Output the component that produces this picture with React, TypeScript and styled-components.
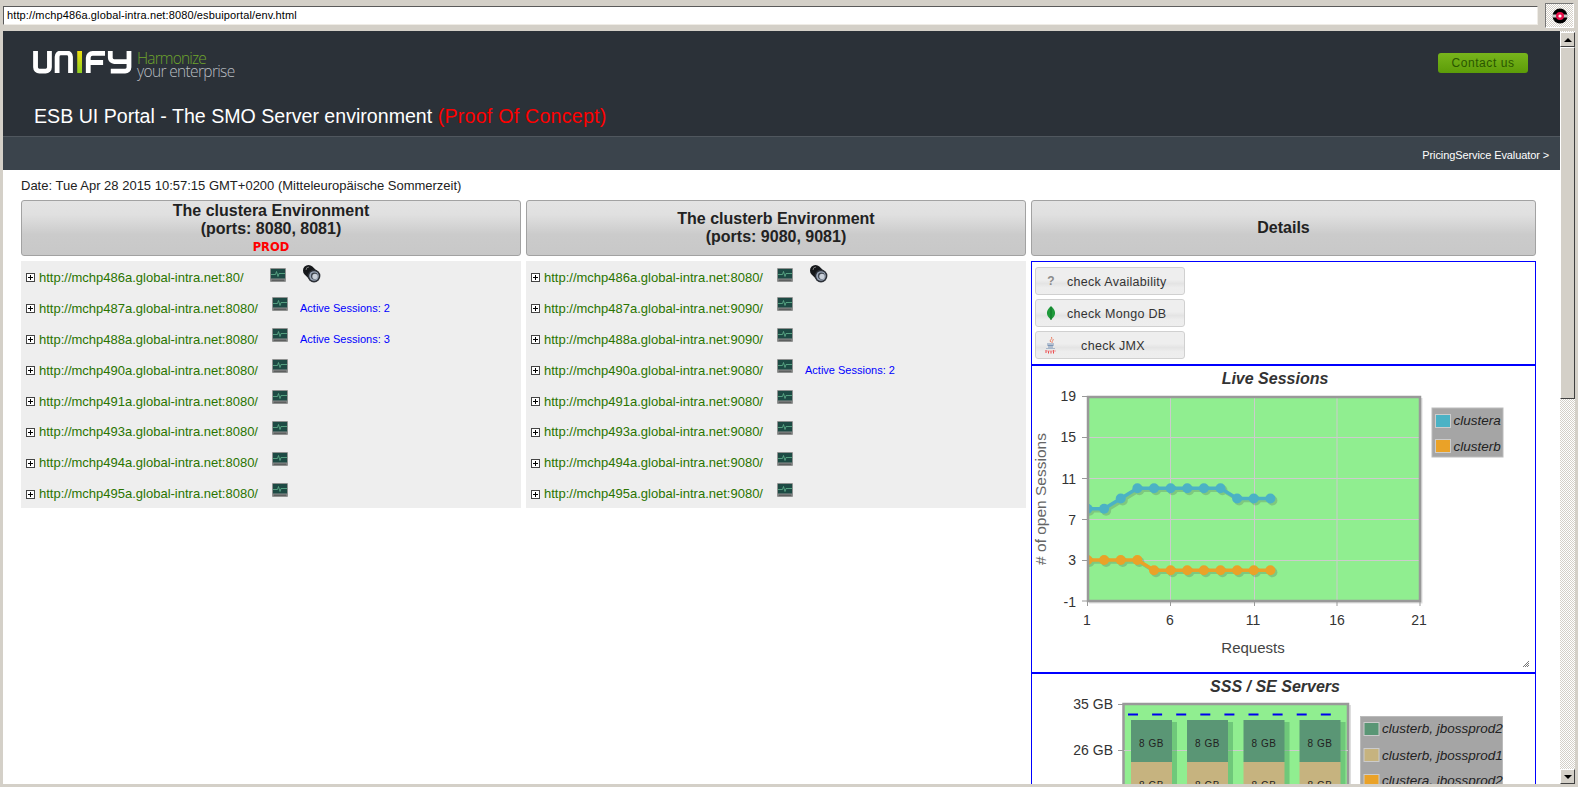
import React from "react";
import styled, { createGlobalStyle } from "styled-components";

const Global = createGlobalStyle`
  html, body { margin: 0; padding: 0; height: 100%; overflow: hidden; background: #d4d0c8; }
  body { font-family: "Liberation Sans", Arial, sans-serif; }
  * { box-sizing: border-box; }
`;

const Window = styled.div`
  width: 1578px; height: 787px; display: flex; flex-direction: column; background: #d4d0c8; overflow: hidden;
`;
const AddressBar = styled.div`
  height: 31px; padding: 3px 4px 0 3px; display: flex; gap: 7px; align-items: flex-start; flex: none;
`;
const AddressInput = styled.div`
  width: 1535px; height: 19px; margin-top: 3px; background: #fff; border: 1px solid; border-color: #5a5a5a #efece6 #efece6 #5a5a5a;
  font-size: 11px; letter-spacing: 0.12px; line-height: 17px; padding-left: 3px; color: #000; white-space: nowrap;
`;
const RecordButton = styled.div`
  width: 29px; height: 25px; border: 1px solid; border-color: #777 #fff #fff #777;
  background: conic-gradient(#d4d0c8 25%, #fff 0 50%, #d4d0c8 0 75%, #fff 0) 0 0 / 2px 2px;
  display: flex; align-items: center; justify-content: center;
`;
const Body = styled.div`
  flex: 1; display: flex; padding: 0 3px 3px 3px; min-height: 0;
`;
const Page = styled.div`
  width: 1557px; background: #fff; overflow: hidden; display: flex; flex-direction: column;
`;
const Masthead = styled.header`
  height: 105px; background: #2b3138; flex: none; display: flex; flex-direction: column; padding: 20px 32px 0 30px;
`;
const MastheadTop = styled.div`
  display: flex; justify-content: space-between; align-items: flex-start; height: 50px;
`;
const Brand = styled.div`
  display: flex; align-items: flex-start; gap: 5px;
`;
const Tagline = styled.div`
  font-family: "Open Sans", sans-serif; font-weight: 300; font-size: 15.5px; line-height: 12.5px; letter-spacing: -0.65px; color: #b9bdc1; white-space: nowrap; padding-top: 1px;
  span { display: block; color: #6fa52c; letter-spacing: -0.85px; }
`;
const ContactButton = styled.div`
  width: 90px; height: 20px; margin-top: 2px; border-radius: 3px; background: linear-gradient(#78b51c, #5c9c08);
  color: #2a5600; font-size: 12px; letter-spacing: 0.55px; line-height: 20px; text-align: center;
`;
const Title = styled.h1`
  margin: 2px 0 0 1px; font-size: 19.6px; font-weight: normal; line-height: 26px; color: #fff; white-space: nowrap;
  span { color: #ff0000; letter-spacing: 0.25px; }
`;
const NavBar = styled.nav`
  height: 34px; flex: none; background: #3b444c; border-top: 1px solid #50575e; color: #fff; font-size: 11px; letter-spacing: -0.1px;
  display: flex; justify-content: flex-end; align-items: flex-start; padding: 12px 11px 0 0; line-height: 13px;
`;
const Content = styled.main`
  flex: 1; padding: 8px 0 0 18px; min-height: 0;
`;
const DateLine = styled.div`
  font-size: 13px; line-height: 16px; color: #222; height: 22px;
`;
const Columns = styled.div`
  display: grid; grid-template-columns: 500px 500px 505px; column-gap: 5px; align-items: start;
`;
const Column = styled.section`
  display: flex; flex-direction: column; gap: 5px; min-width: 0;
`;
const ColumnHead = styled.div`
  height: 56px; border: 1px solid #a2a2a2; border-radius: 3px;
  background: linear-gradient(#e3e3e3 0%, #e0e0e0 25%, #cbcbcb 62%, #c8c8c8 100%);
  display: flex; flex-direction: column; align-items: center; justify-content: center;
  font-size: 16px; font-weight: bold; line-height: 18.5px; color: #222; text-align: center;
`;
const HeadPorts = styled.div`
  font-weight: bold; font-size: 16px;
`;
const ProdLabel = styled.div`
  font-family: "DejaVu Sans", sans-serif; font-size: 11.5px; line-height: 16px; color: #ff0000; font-weight: bold;
`;
const ServerList = styled.div`
  background: #eee; height: 247px; padding: 1px 0 0 5px;
`;
const ServerRow = styled.div`
  height: 30.9px; display: flex; align-items: center; white-space: nowrap;
`;
const ExpandBox = styled.span`
  width: 9px; height: 9px; flex: none; border: 1px solid #444; background: #fff; position: relative; margin: 1px 4px 0 0;
  &::before { content: ""; position: absolute; left: 1px; right: 1px; top: 3px; height: 1px; background: #000; }
  &::after { content: ""; position: absolute; top: 1px; bottom: 1px; left: 3px; width: 1px; background: #000; }
`;
const ServerLink = styled.span<{ $w: number }>`
  width: ${(p) => p.$w}px; flex: none; font-size: 13px; color: #2a7400;
`;
const IconSlot = styled.span<{ $w: number; $lift: number }>`
  width: ${(p) => p.$w}px; flex: none; height: 14px; margin-bottom: ${(p) => p.$lift}px; display: flex; align-items: center;
`;
const Sessions = styled.span`
  font-size: 11px; color: #0000ff;
`;
const Panel = styled.div`
  border: 1px solid #0000ff; flex: none;
`;
const ChecksPanel = styled(Panel)`
  height: 104px; padding: 5px 3px; display: flex; flex-direction: column; gap: 4px;
`;
const ChartPanel = styled(Panel)<{ $h: number }>`
  height: ${(p) => p.$h}px; svg { display: block; }
`;
const PanelStack = styled.div`
  display: flex; flex-direction: column;
`;
const CheckButton = styled.div`
  width: 150px; height: 28px; border: 1px solid #d0d0d0; border-radius: 3px;
  background: linear-gradient(#eee 0%, #eee 45%, #e4e4e4 60%, #ededed 75%, #eee 100%);
  display: flex; align-items: center; font-size: 12.5px; letter-spacing: 0.3px; color: #333; position: relative;
`;
const CheckIcon = styled.span`
  width: 26px; flex: none; display: flex; justify-content: center; margin-left: 2px;
`;
const CheckLabel = styled.span`
  flex: 1; text-align: center; padding: 2px 25px 0 3px; white-space: nowrap;
`;
const QuestionMark = styled.span`
  font-weight: bold; color: #8a8a8a; font-size: 12px;
`;
const ScrollBar = styled.div`
  width: 15px; display: flex; flex-direction: column; margin-right: 0; padding-top: 1px;
  background: conic-gradient(#d4d0c8 25%, #fff 0 50%, #d4d0c8 0 75%, #fff 0) 0 0 / 2px 2px;
`;
const ScrollArrow = styled.div<{ $down?: boolean }>`
  height: 15px; flex: none; background: #d4d0c8; border: 1px solid; border-color: #fff #404040 #404040 #fff;
  display: flex; align-items: center; justify-content: center;
  &::before {
    content: ""; width: 0; height: 0; border-left: 4px solid transparent; border-right: 4px solid transparent;
    ${(p) => (p.$down ? "border-top: 4px solid #000;" : "border-bottom: 4px solid #000;")}
  }
`;
const ScrollThumb = styled.div`
  height: 352px; flex: none; background: #d4d0c8; border: 1px solid; border-color: #fff #404040 #404040 #fff;
`;
const ScrollTrack = styled.div`
  flex: 1;
`;

const Logo = () => (
  <svg width="99" height="23" viewBox="0 0 103 24">
    <g fill="none" stroke="#fff" strokeWidth="5">
      <path d="M2.5 0V17a4 4 0 0 0 4 4H13a4 4 0 0 0 4-4V0" />
      <path d="M25 23V6a4 4 0 0 1 4-4h6a4 4 0 0 1 4 4V23" />
      <path d="M57.500 23V7a4.500 4.500 0 0 1 4.500-4.500H75M57.500 12H73" />
      <path d="M80.500 0V7a4 4 0 0 0 4 4H100M100 0V17a4 4 0 0 1-4 4H81" />
    </g>
    <rect x="46" y="0" width="5" height="23" fill="url(#ig)" />
    <defs>
      <linearGradient id="ig" x1="0" y1="0" x2="0" y2="1">
        <stop offset="0" stopColor="#f0e010" />
        <stop offset="1" stopColor="#90d020" />
      </linearGradient>
    </defs>
  </svg>
);

const MonitorIcon = () => (
  <svg width="16" height="14" viewBox="0 0 16 14">
    <rect x="0" y="0" width="16" height="14" rx="1" fill="#8f9190" />
    <rect x="1" y="1" width="14" height="9.500" fill="#1d4a44" />
    <path d="M1 6.500H5.500L6.500 3.500L8 8.500L9 5.500H15" fill="none" stroke="#5aa886" strokeWidth="0.9" />
    <rect x="1.500" y="11.500" width="13" height="1.500" fill="#5e6060" />
  </svg>
);

const BarrelIcon = () => (
  <svg width="18" height="18" viewBox="0 0 18 18" style={{ marginBottom: 6 }}>
    <path d="M5.500 5.500L11 11" stroke="#15171a" strokeWidth="11" strokeLinecap="round" />
    <path d="M3 5A3 3 0 0 1 6 2" fill="none" stroke="#777" strokeWidth="1" />
    <circle cx="11" cy="11" r="6.400" fill="#2b2f36" />
    <circle cx="11" cy="11" r="4.800" fill="#9aa6b8" />
    <circle cx="11.300" cy="11" r="3.400" fill="#3f4650" />
    <circle cx="12" cy="11.500" r="2.700" fill="#c9d0da" />
  </svg>
);

const MongoLeaf = () => (
  <svg width="10" height="14" viewBox="0 0 10 14">
    <path d="M5 0C8 3 9.500 5 9 8C8.500 11 6 12.500 5 14C4 12.500 1.500 11 1 8C.500 5 2 3 5 0Z" fill="#1f9a3b" />
    <path d="M5 1V14" stroke="#0d6b24" strokeWidth="0.8" />
  </svg>
);

const JavaIcon = () => (
  <svg width="12" height="17" viewBox="0 0 12 17">
    <path d="M6.500 0C8 2 4 3 5.500 5M8 2C9 3 6.500 4 7 6" fill="none" stroke="#e76f51" strokeWidth="0.9" />
    <path d="M2 7H9M2.500 8.500H8.500M3 10H8" stroke="#5f7fa8" strokeWidth="0.8" />
    <path d="M1 11.500H10" stroke="#8aa0bd" strokeWidth="0.7" />
    <path d="M1 13V16M3.500 14V16.500M6 14V16.500M8.500 13V16.500" stroke="#e8484a" strokeWidth="1" />
    <path d="M1 14H11" stroke="#f0888a" strokeWidth="0.8" />
  </svg>
);

const RecordGlyph = () => (
  <svg width="16" height="16" viewBox="0 0 16 16">
    <circle cx="8" cy="8" r="7.500" fill="#000" />
    <rect x="0" y="6.500" width="16" height="3" fill="#c8c8c8" />
    <circle cx="8" cy="8" r="4" fill="#e8104a" />
    <circle cx="8" cy="8" r="1.600" fill="#fff" />
  </svg>
);

const LiveChart = () => {
  const left = 1087.5, right = 1420, top = 396, bottom = 601;
  const px = (n: number) => left + (n - 1) * ((right - left) / 20);
  const py = (v: number) => bottom - (v + 1) * ((bottom - top) / 20);
  const a = [8, 8, 9, 10, 10, 10, 10, 10, 10, 9, 9, 9];
  const b = [3, 3, 3, 3, 2, 2, 2, 2, 2, 2, 2, 2];
  const pts = (s: number[]) => s.map((v, i) => `${px(i + 1)},${py(v)}`).join(" ");
  const series = [
    { d: a, c: "#4bb2c5" },
    { d: b, c: "#eaa228" },
  ];
  const font = { fontFamily: "Liberation Sans, Arial, sans-serif" };
  return (
    <svg width="503" height="306" viewBox="1032 366 503 306" style={font}>
      <text x="1275" y="383.500" textAnchor="middle" fontSize="16" fontStyle="italic" fontWeight="bold" fill="#333">Live Sessions</text>
      <rect x="1089" y="398" width="333.500" height="205.500" fill="#ddd" />
      <rect x="1087" y="396" width="333" height="205" fill="#90ee90" />
      {[1170.5, 1254.5, 1337].map((x) => (
        <line key={x} x1={x} x2={x} y1={396} y2={601} stroke="#ccc" />
      ))}
      {[437.5, 478.5, 519.5, 560.5].map((y) => (
        <line key={y} x1={1087} x2={1420} y1={y} y2={y} stroke="#ccc" />
      ))}
      <svg x="1087" y="396" width="333" height="205" viewBox="1087 396 333 205">
        {series.map((s) => (
          <g key={s.c}>
            <g transform="translate(2,2)" opacity="0.22" fill="#444" stroke="none">
              <polyline points={pts(s.d)} fill="none" stroke="#444" strokeWidth="3.5" />
              {s.d.map((v, i) => (
                <circle key={i} cx={px(i + 1)} cy={py(v)} r="5" />
              ))}
            </g>
            <polyline points={pts(s.d)} fill="none" stroke={s.c} strokeWidth="3.5" />
            {s.d.map((v, i) => (
              <circle key={i} cx={px(i + 1)} cy={py(v)} r="5" fill={s.c} />
            ))}
          </g>
        ))}
      </svg>
      <rect x="1088" y="397" width="332" height="204" fill="none" stroke="#999" strokeWidth="2.500" />
      {[396.5, 437.5, 478.5, 519.5, 560.5, 601].map((y) => (
        <line key={y} x1={1082} x2={1087} y1={y} y2={y} stroke="#999" />
      ))}
      {[1087.5, 1170.5, 1254.5, 1337, 1420].map((x) => (
        <line key={x} x1={x} x2={x} y1={601} y2={606} stroke="#999" />
      ))}
      {[["19", 396], ["15", 437], ["11", 479], ["7", 520], ["3", 560], ["-1", 602]].map(([t, y]) => (
        <text key={t} x="1076" y={Number(y) + 5} textAnchor="end" fontSize="14" fill="#333">{t}</text>
      ))}
      {[["1", 1087], ["6", 1170], ["11", 1253], ["16", 1337], ["21", 1419]].map(([t, x]) => (
        <text key={t} x={x} y="625" textAnchor="middle" fontSize="14" fill="#333">{t}</text>
      ))}
      <text x="1253" y="653" textAnchor="middle" fontSize="15" fill="#444">Requests</text>
      <text transform="translate(1046,499) rotate(-90)" textAnchor="middle" fontSize="15.500" fill="#666"># of open Sessions</text>
      <rect x="1432" y="408" width="71" height="49" fill="#a5a5a5" stroke="#bbb" />
      <rect x="1435.500" y="414.500" width="15" height="13" fill="#4bb2c5" stroke="#ccc" />
      <rect x="1435.500" y="439.500" width="15" height="13" fill="#eaa228" stroke="#ccc" />
      <text x="1453.500" y="425" fontSize="13.500" fontStyle="italic" fill="#222">clustera</text>
      <text x="1453.500" y="451" fontSize="13.500" fontStyle="italic" fill="#222">clusterb</text>
      <path d="M1523 667L1529 661M1525 667L1529 663M1527 667L1529 665" stroke="#555" strokeWidth="0.8" />
    </svg>
  );
};

const ServersChart = () => {
  const bars = [1131, 1187, 1243.500, 1299.500];
  const dashes = Array.from({ length: 9 }, (_, i) => 1128 + i * 24.1);
  return (
    <svg width="503" height="112" viewBox="1032 674 503 112" style={{ fontFamily: "Liberation Sans, Arial, sans-serif" }}>
      <text x="1275" y="691.500" textAnchor="middle" fontSize="16" fontStyle="italic" fontWeight="bold" fill="#333">SSS / SE Servers</text>
      <rect x="1124" y="705" width="227" height="90" fill="#ddd" />
      <rect x="1123.500" y="704" width="224.500" height="90" fill="#90ee90" stroke="#999" strokeWidth="2.500" />
      <line x1="1124" x2="1348" y1="750.500" y2="750.500" stroke="#ccc" />
      {dashes.map((x) => (
        <line key={x} x1={x} x2={x + 10} y1="714.500" y2="714.500" stroke="#0000ee" strokeWidth="2" />
      ))}
      {bars.map((x) => (
        <g key={x}>
          <rect x={x + 5} y="722" width="41" height="70" fill="#3f8f5a" opacity="0.4" />
          <rect x={x} y="720" width="41" height="42" fill="#5a9675" />
          <rect x={x} y="762" width="41" height="30" fill="#c6b37f" />
          <text x={x + 20.500} y="747" textAnchor="middle" fontSize="10" letterSpacing="0.5" fill="#222">8 GB</text>
          <text x={x + 20.500} y="789" textAnchor="middle" fontSize="10" letterSpacing="0.5" fill="#222">8 GB</text>
        </g>
      ))}
      <line x1="1118" x2="1123" y1="704.500" y2="704.500" stroke="#999" />
      <line x1="1118" x2="1123" y1="750.500" y2="750.500" stroke="#999" />
      <text x="1113" y="709" textAnchor="end" fontSize="14" fill="#333">35 GB</text>
      <text x="1113" y="755" textAnchor="end" fontSize="14" fill="#333">26 GB</text>
      <rect x="1360.500" y="716.500" width="142" height="90" fill="#a5a5a5" stroke="#bbb" />
      <rect x="1364" y="722.500" width="15" height="13" fill="#5a9675" stroke="#ccc" />
      <rect x="1364" y="748.500" width="15" height="13" fill="#c6b37f" stroke="#ccc" />
      <rect x="1364" y="774.500" width="15" height="13" fill="#eaa228" stroke="#ccc" />
      <text x="1382" y="733" fontSize="13.500" fontStyle="italic" fill="#222">clusterb, jbossprod2</text>
      <text x="1382" y="759.500" fontSize="13.500" fontStyle="italic" fill="#222">clusterb, jbossprod1</text>
      <text x="1382" y="785" fontSize="13.500" fontStyle="italic" fill="#222">clustera, jbossprod2</text>
    </svg>
  );
};

type Srv = { url: string; sessions?: number; barrel?: boolean };
const left: Srv[] = [
  { url: "http://mchp486a.global-intra.net:80/", barrel: true },
  { url: "http://mchp487a.global-intra.net:8080/", sessions: 2 },
  { url: "http://mchp488a.global-intra.net:8080/", sessions: 3 },
  { url: "http://mchp490a.global-intra.net:8080/" },
  { url: "http://mchp491a.global-intra.net:8080/" },
  { url: "http://mchp493a.global-intra.net:8080/" },
  { url: "http://mchp494a.global-intra.net:8080/" },
  { url: "http://mchp495a.global-intra.net:8080/" },
];
const right: Srv[] = [
  { url: "http://mchp486a.global-intra.net:8080/", barrel: true },
  { url: "http://mchp487a.global-intra.net:9090/" },
  { url: "http://mchp488a.global-intra.net:9090/" },
  { url: "http://mchp490a.global-intra.net:9080/", sessions: 2 },
  { url: "http://mchp491a.global-intra.net:9080/" },
  { url: "http://mchp493a.global-intra.net:9080/" },
  { url: "http://mchp494a.global-intra.net:9080/" },
  { url: "http://mchp495a.global-intra.net:9080/" },
];

const Servers = ({ rows, firstWidth }: { rows: Srv[]; firstWidth: number }) => (
  <ServerList>
    {rows.map((r, i) => (
      <ServerRow key={r.url}>
        <ExpandBox />
        <ServerLink $w={i === 0 ? firstWidth : 233}>{r.url}</ServerLink>
        <IconSlot $w={r.barrel ? 33 : 28} $lift={i === 0 ? 5 : 8}>
          <MonitorIcon />
        </IconSlot>
        {r.barrel && <BarrelIcon />}
        {r.sessions !== undefined && <Sessions>Active Sessions: {r.sessions}</Sessions>}
      </ServerRow>
    ))}
  </ServerList>
);

export default function App() {
  return (
    <Window>
      <Global />
      <AddressBar>
        <AddressInput>http://mchp486a.global-intra.net:8080/esbuiportal/env.html</AddressInput>
        <RecordButton>
          <RecordGlyph />
        </RecordButton>
      </AddressBar>
      <Body>
        <Page>
          <Masthead>
            <MastheadTop>
              <Brand>
                <Logo />
                <Tagline>
                  <span>Harmonize</span>
                  your enterprise
                </Tagline>
              </Brand>
              <ContactButton>Contact us</ContactButton>
            </MastheadTop>
            <Title>
              ESB UI Portal - The SMO Server environment <span>(Proof Of Concept)</span>
            </Title>
          </Masthead>
          <NavBar>PricingService Evaluator &gt;</NavBar>
          <Content>
            <DateLine>Date: Tue Apr 28 2015 10:57:15 GMT+0200 (Mitteleuropäische Sommerzeit)</DateLine>
            <Columns>
              <Column>
                <ColumnHead>
                  The clustera Environment
                  <HeadPorts>(ports: 8080, 8081)</HeadPorts>
                  <ProdLabel>PROD</ProdLabel>
                </ColumnHead>
                <Servers rows={left} firstWidth={231} />
              </Column>
              <Column>
                <ColumnHead>
                  The clusterb Environment
                  <HeadPorts>(ports: 9080, 9081)</HeadPorts>
                </ColumnHead>
                <Servers rows={right} firstWidth={233} />
              </Column>
              <Column>
                <ColumnHead>Details</ColumnHead>
                <PanelStack>
                  <ChecksPanel>
                    <CheckButton>
                      <CheckIcon><QuestionMark>?</QuestionMark></CheckIcon>
                      <CheckLabel>check Availability</CheckLabel>
                    </CheckButton>
                    <CheckButton>
                      <CheckIcon><MongoLeaf /></CheckIcon>
                      <CheckLabel>check Mongo DB</CheckLabel>
                    </CheckButton>
                    <CheckButton>
                      <CheckIcon><JavaIcon /></CheckIcon>
                      <CheckLabel>check JMX</CheckLabel>
                    </CheckButton>
                  </ChecksPanel>
                  <ChartPanel $h={308}><LiveChart /></ChartPanel>
                  <ChartPanel $h={200}><ServersChart /></ChartPanel>
                </PanelStack>
              </Column>
            </Columns>
          </Content>
        </Page>
        <ScrollBar>
          <ScrollArrow />
          <ScrollThumb />
          <ScrollTrack />
          <ScrollArrow $down />
        </ScrollBar>
      </Body>
    </Window>
  );
}
